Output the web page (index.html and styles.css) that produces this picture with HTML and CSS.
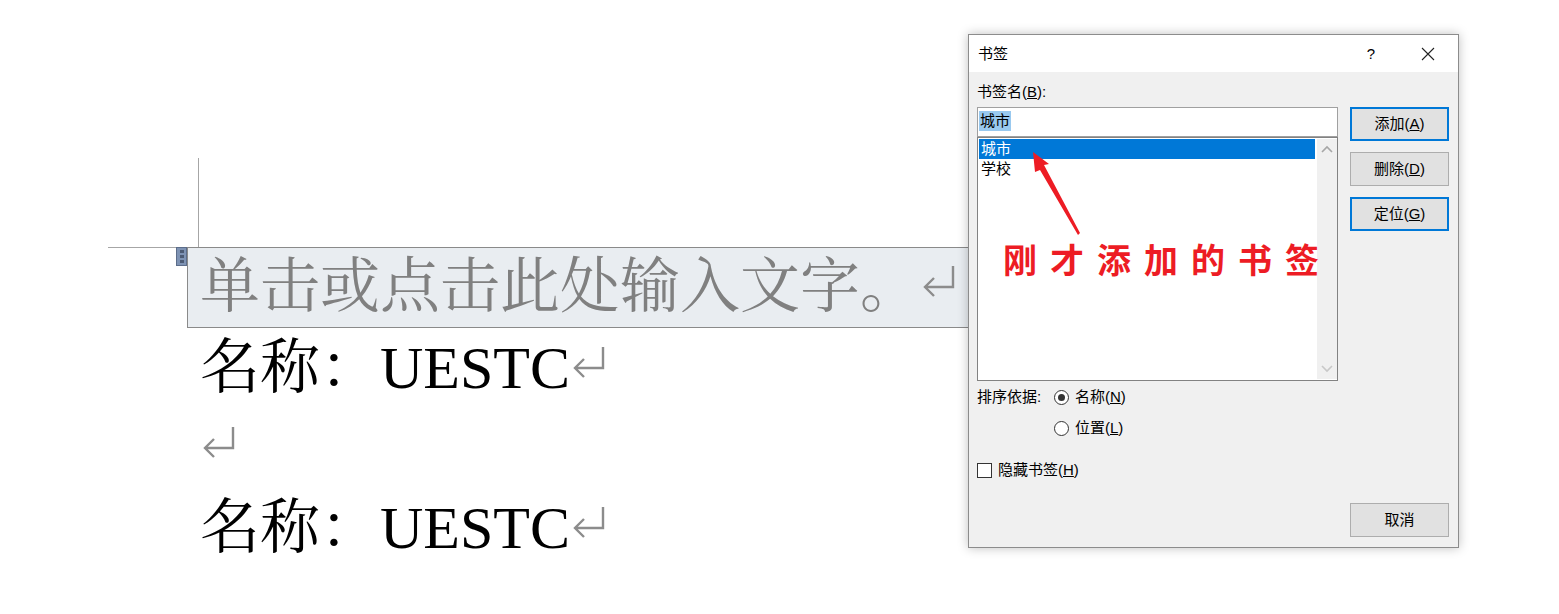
FILE: index.html
```html
<!DOCTYPE html>
<html>
<head>
    <title>书签</title>
    <meta charset="UTF-8">
    <meta name="viewport" content="width=device-width, initial-scale=1.0">
    <link rel="stylesheet" href="styles.css">
</head>
<body>
  <div class="doc">
    <div class="crop-mark"></div>
    <div class="cc">
      <span class="cc-handle"><i></i><i></i><i></i></span>
      <span class="placeholder">单击或点击此处输入文字。</span><svg class="mark" viewBox="0 0 34 34"><path d="M31 1 V22 H3 M12 13 L3 22 L12 31"/></svg>
    </div>
    <p class="para">名称：<span class="latin">UESTC</span><svg class="mark" viewBox="0 0 34 34"><path d="M31 1 V22 H3 M12 13 L3 22 L12 31"/></svg></p>
    <p class="para"><svg class="mark" viewBox="0 0 34 34"><path d="M31 1 V22 H3 M12 13 L3 22 L12 31"/></svg></p>
    <p class="para">名称：<span class="latin">UESTC</span><svg class="mark" viewBox="0 0 34 34"><path d="M31 1 V22 H3 M12 13 L3 22 L12 31"/></svg></p>
  </div>

  <div class="dialog">
    <div class="titlebar">
      <span class="title">书签</span>
      <span class="help">?</span>
      <span class="close">
        <svg width="14" height="14" viewBox="0 0 14 14"><path d="M1 1 L13 13 M13 1 L1 13" stroke="#222" stroke-width="1.1" fill="none"/></svg>
      </span>
    </div>

    <div class="dlg-body">
      <div class="top">
        <div class="left-col">
          <div class="label">书签名(<u>B</u>):</div>
          <div class="name-input"><span class="sel">城市</span></div>
          <div class="listbox">
            <div class="items">
              <div class="item active">城市</div>
              <div class="item">学校</div>
            </div>
            <div class="scrollbar">
              <svg width="20" height="20" viewBox="0 0 20 20"><path d="M5 13 L10 8 L15 13" stroke="#a6a6a6" stroke-width="1.6" fill="none"/></svg>
              <svg width="20" height="20" viewBox="0 0 20 20"><path d="M5 7 L10 12 L15 7" stroke="#c8c8c8" stroke-width="1.6" fill="none"/></svg>
            </div>
          </div>
        </div>
        <div class="buttons">
          <div class="btn default"><span>添加(<u>A</u>)</span></div>
          <div class="btn"><span>删除(<u>D</u>)</span></div>
          <div class="btn default"><span>定位(<u>G</u>)</span></div>
        </div>
      </div>

      <div class="sort">
        <span class="sort-label">排序依据:</span>
        <div class="radios">
          <label class="radio"><span class="dot checked"></span><span>名称(<u>N</u>)</span></label>
          <label class="radio"><span class="dot"></span><span>位置(<u>L</u>)</span></label>
        </div>
      </div>

      <label class="check"><span class="box"></span><span>隐藏书签(<u>H</u>)</span></label>

      <div class="footer">
        <div class="btn">取消</div>
      </div>
    </div>

    <svg class="arrow" width="70" height="100" viewBox="0 0 70 100">
      <polygon points="12,7 28,19 23,20 59,88 57,90 19,25 14,27" fill="#ed1c24"/>
    </svg>
    <div class="note">刚才添加的书签</div>
  </div>
</body>
</html>
```

FILE: styles.css
```css
body {
    margin: 0;
    background-color: white;
    font-family: "Liberation Serif", "Noto Serif CJK SC", "Noto Sans CJK SC", serif;
}

/* document page */
.doc {
    padding-top: 158px;
}

.crop-mark {
    margin-left: 108px;
    width: 90px;
    height: 89px;
    border-right: 1px solid #a6a6a6;
    border-bottom: 1px solid #a6a6a6;
}

.cc {
    position: relative;
    box-sizing: border-box;
    margin-top: -1px;
    margin-left: 187px;
    width: 800px;
    height: 81px;
    padding-left: 12px;
    border: 1px solid #8a8a8a;
    background-color: #e9edf1;
    font-size: 60px;
    line-height: 79px;
    white-space: nowrap;
}

.cc-handle {
    position: absolute;
    left: -12px;
    top: -1px;
    width: 9px;
    height: 17px;
    border: 1px solid #5c6d8a;
    background-color: #7e93b4;
    display: flex;
    flex-direction: column;
    align-items: center;
    justify-content: space-evenly;
}

.cc-handle i {
    width: 4px;
    height: 3px;
    background-color: #4c5b74;
}

.placeholder {
    color: #808080;
}

.para {
    margin: 0;
    padding-left: 200px;
    font-size: 60px;
    line-height: 80px;
    white-space: nowrap;
    color: black;
}

.latin {
    font-family: "Liberation Serif", serif;
}

/* paragraph return mark */
.mark {
    width: 34px;
    height: 34px;
    vertical-align: 8px;
    margin-left: 2px;
}

.mark path {
    fill: none;
    stroke: #8c8c8c;
    stroke-width: 2.4;
}

/* bookmark dialog */
.dialog {
    position: absolute;
    left: 968px;
    top: 34px;
    box-sizing: border-box;
    width: 491px;
    height: 514px;
    border: 1px solid #8c8c8c;
    background-color: #f0f0f0;
    box-shadow: 0 0 10px rgba(0, 0, 0, 0.25);
    display: flex;
    flex-direction: column;
    font-family: "Liberation Sans", "Noto Sans CJK SC", sans-serif;
    font-size: 15px;
    color: black;
}

.titlebar {
    height: 37px;
    background-color: white;
    display: flex;
    align-items: center;
    padding-left: 9px;
}

.title {
    flex: 1;
    margin-top: -3px;
}

.help {
    font-size: 15px;
    margin-right: 46px;
}

.close {
    display: flex;
    margin-right: 23px;
}

.dlg-body {
    flex: 1;
    display: flex;
    flex-direction: column;
    padding: 0 9px 10px 8px;
    line-height: 20px;
}

.top {
    display: flex;
    gap: 12px;
}

.left-col {
    width: 361px;
}

.label {
    height: 35px;
    padding-top: 10px;
    box-sizing: border-box;
}

.name-input {
    box-sizing: border-box;
    height: 30px;
    border: 1px solid #a0a0a0;
    background-color: white;
    padding: 3px 1px;
}

.sel {
    display: inline-block;
    background-color: #99c9ef;
    padding: 0 1px;
    line-height: 20px;
}

.listbox {
    box-sizing: border-box;
    height: 244px;
    border: 1px solid #828282;
    background-color: white;
    display: flex;
    padding: 1px 0 1px 1px;
}

.items {
    flex: 1;
    padding-right: 2px;
}

.item {
    height: 20px;
    line-height: 20px;
    padding-left: 2px;
}

.item.active {
    background-color: #0078d7;
    color: white;
}

.scrollbar {
    width: 20px;
    background-color: #f0f0f0;
    display: flex;
    flex-direction: column;
    justify-content: space-between;
}

.buttons {
    display: flex;
    flex-direction: column;
    gap: 11px;
    margin-top: 35px;
}

.btn {
    box-sizing: border-box;
    width: 99px;
    height: 34px;
    border: 1px solid #adadad;
    background-color: #e1e1e1;
    display: flex;
    align-items: center;
    justify-content: center;
}

.btn.default {
    border: 2px solid #0078d7;
}

.sort {
    display: flex;
    margin-top: 6px;
}

.sort-label {
    width: 77px;
}

.radios {
    display: flex;
    flex-direction: column;
    gap: 11px;
}

.radio,
.check {
    display: flex;
    align-items: center;
    gap: 6px;
}

.dot {
    box-sizing: border-box;
    width: 15px;
    height: 15px;
    border: 1px solid #333;
    border-radius: 50%;
    background-color: white;
    display: flex;
    align-items: center;
    justify-content: center;
}

.dot.checked::after {
    content: "";
    width: 7px;
    height: 7px;
    border-radius: 50%;
    background-color: #333;
}

.check {
    margin-top: 22px;
}

.box {
    box-sizing: border-box;
    width: 15px;
    height: 15px;
    border: 1px solid #333;
    background-color: white;
}

.footer {
    margin-top: auto;
    display: flex;
    justify-content: flex-end;
}

/* red annotation */
.arrow {
    position: absolute;
    left: 52px;
    top: 110px;
}

.note {
    position: absolute;
    left: 34px;
    top: 199px;
    font-family: "Noto Sans CJK SC", sans-serif;
    font-size: 34px;
    font-weight: bold;
    letter-spacing: 13px;
    color: #ed1c24;
    white-space: nowrap;
}
```
